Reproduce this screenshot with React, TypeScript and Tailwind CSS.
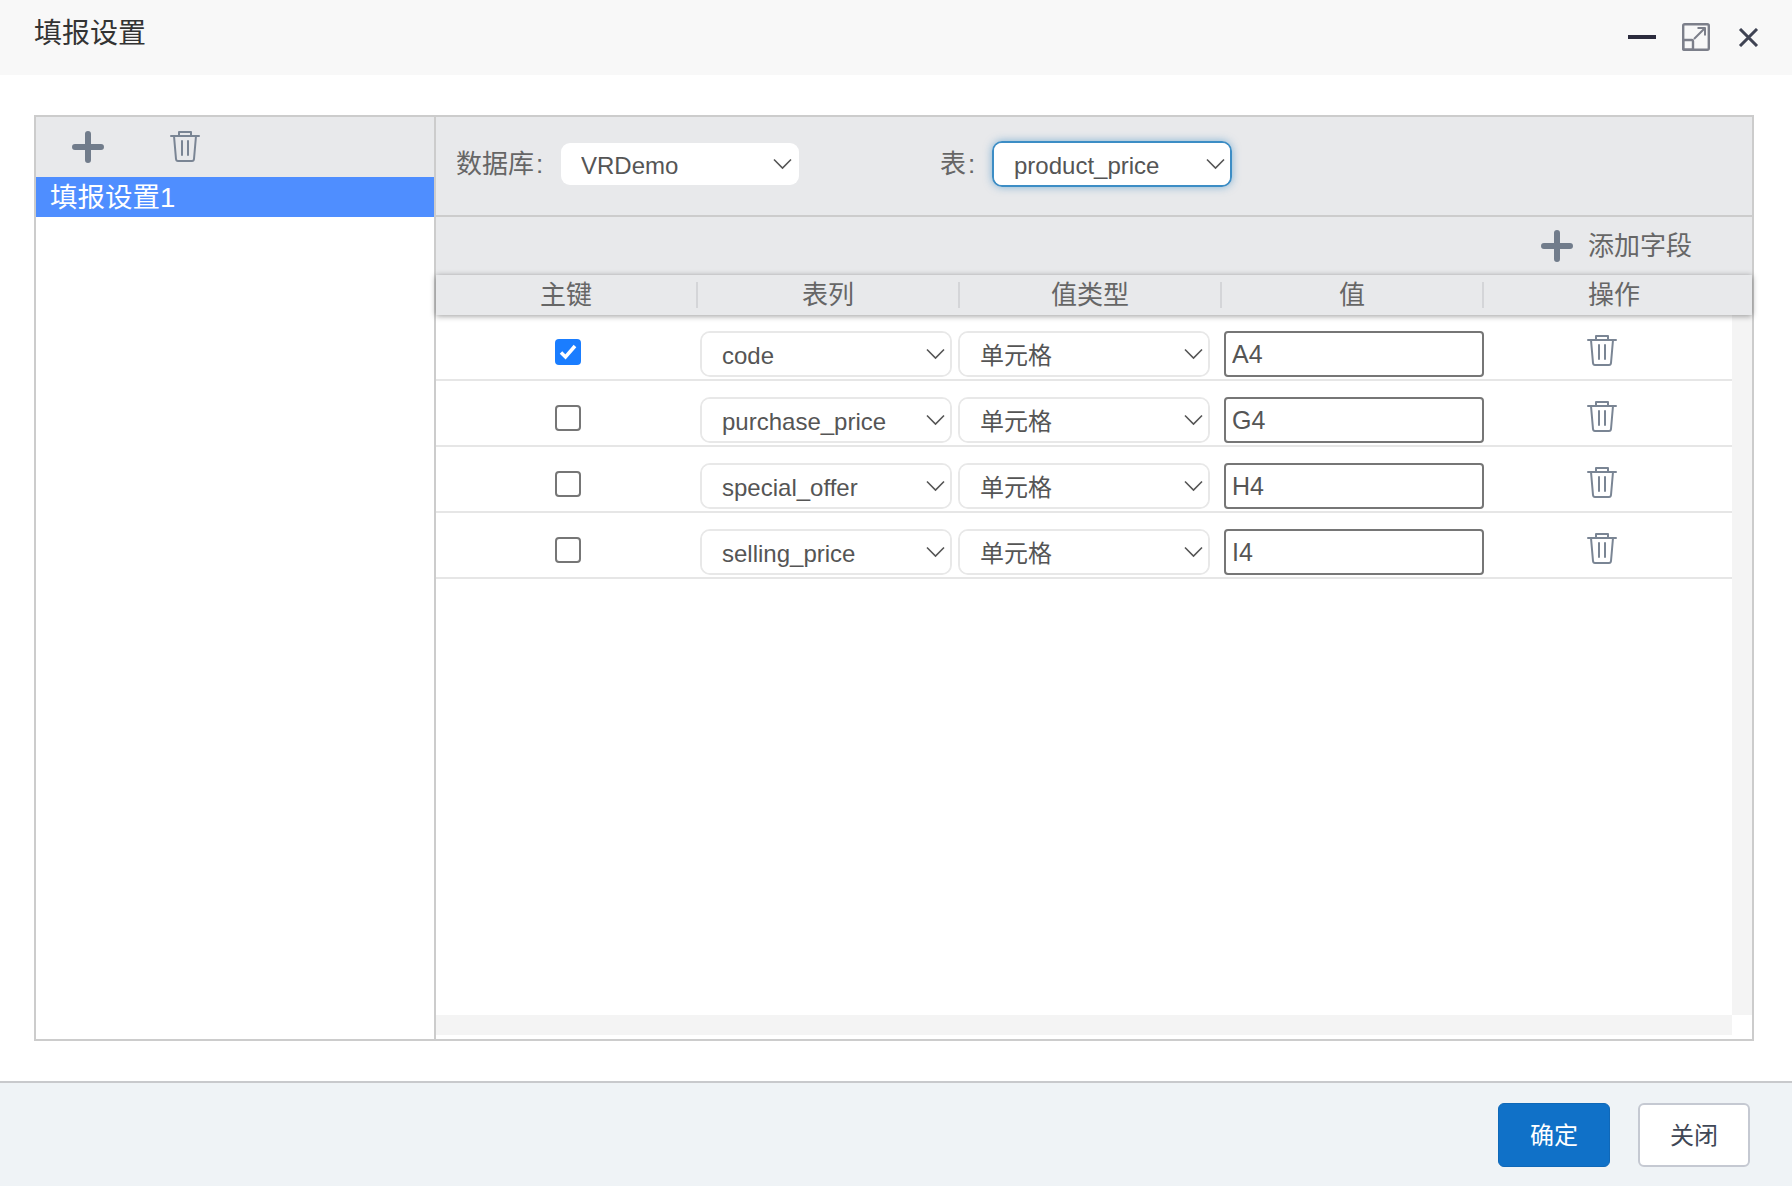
const rows = [
  { column: "code", value: "A4", primary: true },
  { column: "purchase_price", value: "G4", primary: false },
  { column: "special_offer", value: "H4", primary: false },
  { column: "selling_price", value: "I4", primary: false },
];

const columns = ["主键", "表列", "值类型", "值", "操作"];

const PlusIcon = () => (
  <svg width="32" height="32" viewBox="0 0 32 32" fill="none" stroke="#717c8b" strokeWidth="6" strokeLinecap="round">
    <path d="M16 3v26M3 16h26" />
  </svg>
);

const TrashIcon = () => (
  <svg width="30" height="32" viewBox="0 0 30 32" fill="none" stroke="#7a8594" strokeWidth="2" strokeLinejoin="round" strokeLinecap="round">
    <path d="M1 6h28" />
    <path d="M9 6V2h12v4" />
    <path d="M4 6l2 23q.2 2 2 2h14q1.800 0 2-2l2-23" />
    <path d="M12 11v14M18 11v14" />
  </svg>
);

const Select = ({ value, className, chevron }: { value: string; className: string; chevron: string }) => (
  <div className={`relative ${className}`}>
    <select
      defaultValue={value}
      className="h-full w-full appearance-none bg-white pl-[20px] pr-[30px] pt-[4px] text-[24px] text-[#555] outline-none"
    >
      <option>{value}</option>
    </select>
    <svg
      className={`pointer-events-none absolute top-[50%] -translate-y-1/2 ${chevron}`}
      width="19"
      height="11"
      viewBox="0 0 19 11"
      fill="none"
      stroke="#555"
      strokeWidth="1.600"
    >
      <path d="M1 1l8.500 8.500L18 1" />
    </svg>
  </div>
);

const Label = ({ text, className }: { text: string; className: string }) => (
  <span className={`pt-[1px] text-[26px] leading-[40px] text-[#666] ${className}`}>
    {text}
    <span className="ml-[2px]">:</span>
  </span>
);

export default function App() {
  return (
    <div className="flex h-[1186px] flex-col bg-white font-['Liberation_Sans','Noto_Sans_CJK_SC',sans-serif]">
      <header className="flex h-[75px] shrink-0 items-start justify-between bg-[#f8f8f8] pl-[34px] pr-[33px]">
        <h1 className="mt-[14px] text-[28px] leading-[40px] text-[#333]">填报设置</h1>
        <div className="mt-[23px] flex items-start">
          <div className="mt-[12px] h-[4px] w-[28px] bg-[#2b2b3d]" />
          <svg className="ml-[26px]" width="28" height="28" viewBox="0 0 28 28" fill="none" stroke="#7c7f8a" strokeWidth="2.400" strokeLinejoin="round">
            <rect x="1.200" y="1.200" width="25.600" height="25.600" rx="1.500" />
            <rect x="1.200" y="17" width="9.800" height="9.800" rx="1" />
            <path d="M12 16L23 5M15.500 5H23v7.500" strokeWidth="2" />
          </svg>
          <svg className="ml-[28px] mt-[5px]" width="21" height="19" viewBox="0 0 21 19" fill="none" stroke="#3f4353" strokeWidth="3">
            <path d="M2 1l17 17M19 1L2 18" />
          </svg>
        </div>
      </header>

      <main className="flex-1 px-[34px] pt-[40px]">
        <div className="flex h-[926px] w-[1720px] border-2 border-[#ccc]">
          <aside className="w-[398px] shrink-0">
            <div className="flex h-[60px] items-start bg-[#e8e9eb] pl-[36px] pt-[14px]">
              <PlusIcon />
              <div className="-mt-[1px] ml-[66px]">
                <TrashIcon />
              </div>
            </div>
            <div className="flex h-[40px] items-center bg-[#4f8eff] pl-[14px] pt-[1px] text-[27.500px] text-white">填报设置1</div>
          </aside>

          <section className="relative flex min-w-0 flex-1 flex-col border-l-2 border-[#ccc]">
            <div className="flex h-[100px] shrink-0 items-start border-b-2 border-[#ccc] bg-[#e8e9eb] pt-[26px]">
              <Label text="数据库" className="ml-[20px] w-[105px]" />
              <Select value="VRDemo" chevron="right-[7px]" className="h-[42px] w-[238px] overflow-hidden rounded-[9px]" />
              <Label text="表" className="ml-[141px] w-[52px]" />
              <Select
                value="product_price"
                chevron="right-[5px]"
                className="-mt-[2px] h-[46px] w-[240px] overflow-hidden rounded-[10px] border-2 border-[#3c8dc5] shadow-[0_0_8px_rgba(60,141,197,0.6)]"
              />
            </div>

            <div className="flex h-[58px] shrink-0 items-center justify-end bg-[#e8e9eb] pr-[60px]">
              <PlusIcon />
              <span className="ml-[15px] text-[26px] text-[#666]">添加字段</span>
            </div>

            <div className="relative z-10 grid h-[40px] shrink-0 grid-cols-[repeat(5,262px)] items-center bg-[#e8e9eb] shadow-[0_1px_6px_rgba(0,0,0,0.4)]">
              {columns.map((name, i) => (
                <div key={name} className={`flex h-[26px] items-center justify-center text-[26px] text-[#666] ${i < 4 ? "border-r-2 border-[#d4d5d8]" : "pr-[2px]"}`}>
                  {name}
                </div>
              ))}
            </div>

            <div className="flex min-h-0 flex-1">
              <div className="min-w-0 flex-1">
                {rows.map((row) => (
                  <div key={row.column} className="grid h-[66px] grid-cols-[264px_258px_266px_260px_1fr] border-b-2 border-[#e6e6e6] pt-[16px]">
                    <div className="flex justify-center pt-[8px]">
                      {row.primary ? (
                        <span className="flex h-[26px] w-[26px] items-center justify-center rounded-[4px] bg-[#1a7dff]">
                          <svg width="18" height="16" viewBox="0 0 18 16" fill="none" stroke="white" strokeWidth="3.500">
                            <path d="M2 8.500l4.500 4.500L16 2" />
                          </svg>
                        </span>
                      ) : (
                        <span className="h-[26px] w-[26px] rounded-[4px] border-2 border-[#767676] bg-white" />
                      )}
                    </div>
                    <Select value={row.column} chevron="right-[5px]" className="h-[46px] w-[252px] overflow-hidden rounded-[10px] border-2 border-[#e8e8e8]" />
                    <Select value="单元格" chevron="right-[5px]" className="h-[46px] w-[252px] overflow-hidden rounded-[10px] border-2 border-[#e8e8e8]" />
                    <input
                      defaultValue={row.value}
                      className="h-[46px] w-[260px] rounded-[4px] border-2 border-[#767676] bg-white pl-[6px] text-[25px] text-[#555] outline-none"
                    />
                    <div className="flex justify-center pr-[12px] pt-[3px]">
                      <TrashIcon />
                    </div>
                  </div>
                ))}
              </div>
              <div className="w-[20px] shrink-0 bg-[#f4f4f4]" />
            </div>
            <div className="mb-[4px] mr-[20px] h-[20px] shrink-0 bg-[#f4f4f4]" />
          </section>
        </div>
      </main>

      <footer className="flex h-[105px] shrink-0 items-start justify-end gap-[28px] border-t-2 border-[#c8c9cc] bg-[#eff3f6] pr-[42px] pt-[20px]">
        <button className="h-[64px] w-[112px] rounded-[6px] border border-[#0f68b8] bg-[#1071c8] pt-[1px] text-[24px] text-white">确定</button>
        <button className="h-[64px] w-[112px] rounded-[6px] border-2 border-[#c5c9d2] bg-white pt-[1px] text-[24px] text-[#3f4756]">关闭</button>
      </footer>
    </div>
  );
}
